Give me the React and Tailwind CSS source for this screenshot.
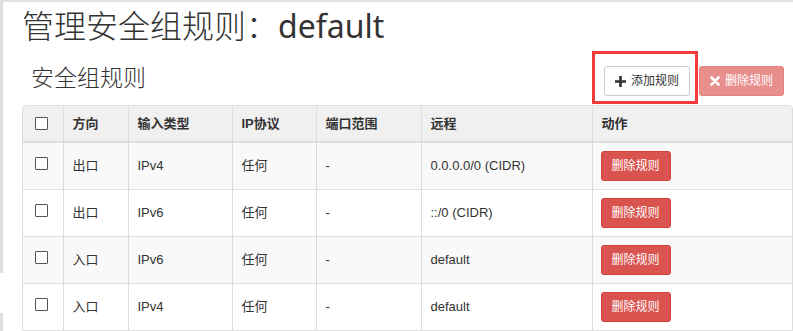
const rules = [
  { dir: '出口', type: 'IPv4', proto: '任何', port: '-', remote: '0.0.0.0/0 (CIDR)' },
  { dir: '出口', type: 'IPv6', proto: '任何', port: '-', remote: '::/0 (CIDR)' },
  { dir: '入口', type: 'IPv6', proto: '任何', port: '-', remote: 'default' },
  { dir: '入口', type: 'IPv4', proto: '任何', port: '-', remote: 'default' },
];

const Checkbox = () => (
  <span className="block w-[13px] h-[13px] border border-[#555] bg-white rounded-[1px]" />
);

const App = () => {
  return (
    <div
      className="w-[793px] h-[331px] bg-white overflow-hidden border-t-2 border-[#e3e3e3] flex text-[#333]"
      style={{ fontFamily: '"Liberation Sans", "Noto Sans CJK SC", sans-serif' }}
    >
      {/* left rail */}
      <div className="w-[3px] flex flex-col shrink-0">
        <div className="h-[271px] bg-[#dedede]" />
        <div className="h-[40px]" />
        <div className="flex-1 bg-[#dedede]" />
      </div>

      <div className="flex-1 pl-[19px]">
        {/* Header */}
        <h1
          className="text-[32px] leading-[40px] font-light text-[#333] mt-[4px]"
          style={{ fontFamily: '"Noto Sans", "Noto Sans CJK SC", sans-serif' }}
        >
          管理安全组规则：<span className="font-normal">default</span>
        </h1>

        <div className="flex items-end justify-between pr-[9px] h-[59px]">
          <h3
            className="text-[23px] leading-[30px] font-light text-[#333] pl-[9px] mb-[14px]"
            style={{ fontFamily: '"Noto Sans CJK SC", sans-serif' }}
          >
            安全组规则
          </h3>
          <div className="flex mb-[1px]">
            <div className="border-[3px] border-[#f23a3a] pl-[9px] pr-[5px] pt-[12px] pb-[5px]">
              <button className="h-[30px] w-[86px] flex items-center justify-center gap-[5px] bg-white border border-[#ccc] rounded-[3px] text-[12px] text-[#333]">
                <svg width="11" height="11" viewBox="0 0 10 10">
                  <path d="M3.8 0h2.4v3.8H10v2.4H6.2V10H3.8V6.2H0V3.8h3.8z" fill="#333" />
                </svg>
                添加规则
              </button>
            </div>
            <button className="self-end mb-[8px] h-[30px] w-[85px] ml-[1px] flex items-center justify-center gap-[5px] bg-[#e88e8c] border border-[#e5807d] rounded-[3px] text-[12px] text-white">
              <svg width="10" height="10" viewBox="0 0 10 10">
                <path d="M1.5 1.5l7 7M8.5 1.5l-7 7" stroke="#fff" strokeWidth="2.6" strokeLinecap="round" />
              </svg>
              删除规则
            </button>
          </div>
        </div>

        {/* Table */}
        <div className="border border-[#ddd] rounded-t-[4px] overflow-hidden w-[771px]">
          <table className="w-full border-collapse text-[13px] table-fixed">
            <colgroup>
              <col className="w-[40px]" />
              <col className="w-[65px]" />
              <col className="w-[104px]" />
              <col className="w-[84px]" />
              <col className="w-[105px]" />
              <col className="w-[171px]" />
              <col />
            </colgroup>
            <thead>
              <tr className="bg-[#f0f0f0] h-[36px] border-b-2 border-[#ddd]">
                <th className="pl-[12px] text-left align-middle">
                  <Checkbox />
                </th>
                {['方向', '输入类型', 'IP协议', '端口范围', '远程', '动作'].map((h) => (
                  <th key={h} className="border-l border-[#ddd] pl-[9px] text-left font-bold">
                    {h}
                  </th>
                ))}
              </tr>
            </thead>
            <tbody>
              {rules.map((r, i) => (
                <tr key={i} className={`h-[47px] border-t border-[#ddd] ${i % 2 === 0 ? 'bg-[#f9f9f9]' : 'bg-white'}`}>
                  <td className="pl-[12px] align-middle">
                    <div className="-mt-[4px]">
                      <Checkbox />
                    </div>
                  </td>
                  <td className="border-l border-[#ddd] pl-[9px]">{r.dir}</td>
                  <td className="border-l border-[#ddd] pl-[9px]">{r.type}</td>
                  <td className="border-l border-[#ddd] pl-[9px]">{r.proto}</td>
                  <td className="border-l border-[#ddd] pl-[9px]">{r.port}</td>
                  <td className="border-l border-[#ddd] pl-[9px]">{r.remote}</td>
                  <td className="border-l border-[#ddd] pl-[8px]">
                    <button className="h-[30px] w-[70px] bg-[#d9534f] border border-[#d43f3a] rounded-[3px] text-white text-[12px]">
                      删除规则
                    </button>
                  </td>
                </tr>
              ))}
            </tbody>
          </table>
        </div>
      </div>
    </div>
  );
};

export default App;
